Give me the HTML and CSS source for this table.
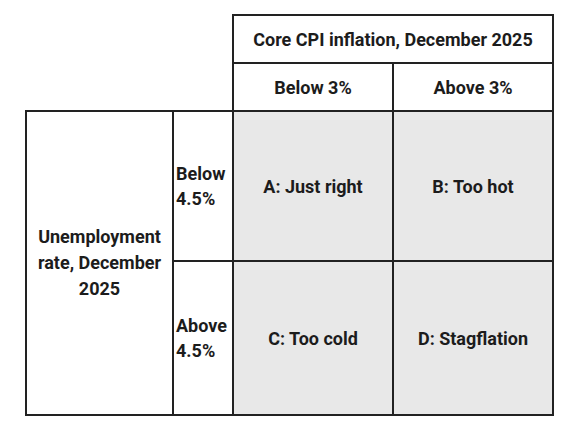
FILE: index.html
```html
<!DOCTYPE html>
<html lang="en">
<head>
  <meta charset="UTF-8">
  <title>Macro scenarios</title>
  <link rel="stylesheet" href="styles.css">
</head>
<body>
<table class="matrix">
  <colgroup>
    <col class="col-label">
    <col class="col-band">
    <col class="col-cell">
    <col class="col-cell">
  </colgroup>
  <tr class="row-head">
    <td class="blank"></td>
    <td class="blank"></td>
    <th colspan="2">Core CPI inflation, December 2025</th>
  </tr>
  <tr class="row-head">
    <td class="blank"></td>
    <td class="blank"></td>
    <th>Below 3%</th>
    <th>Above 3%</th>
  </tr>
  <tr class="row-top">
    <th class="side" rowspan="2">Unemployment rate, December 2025</th>
    <th class="band">Below 4.5%</th>
    <td class="quad">A: Just right</td>
    <td class="quad">B: Too hot</td>
  </tr>
  <tr class="row-bottom">
    <th class="band">Above 4.5%</th>
    <td class="quad">C: Too cold</td>
    <td class="quad">D: Stagflation</td>
  </tr>
</table>
</body>
</html>
```

FILE: styles.css
```css
html, body {
  margin: 0;
  padding: 0;
  background: #fff;
}

body {
  padding: 14px 0 0 25px;
  font-family: Roboto, "Liberation Sans", sans-serif;
  font-weight: 700;
  font-size: 18px;
  color: #1c1c1c;
}

.matrix {
  border-collapse: collapse;
  table-layout: fixed;
}

.col-label { width: 147px; }
.col-band  { width: 60px; }
.col-cell  { width: 160px; }

.matrix th,
.matrix td {
  border: 2px solid #222;
  padding: 0;
  font-weight: 700;
  text-align: center;
  vertical-align: middle;
  line-height: 25px;
}

.matrix td.blank {
  border: none;
}

.row-head { height: 48px; }
.row-top { height: 150px; }
.row-bottom { height: 154px; }

.matrix .side {
  padding: 0 6px;
  line-height: 26px;
}

.matrix .band {
  text-align: left;
  padding-left: 2px;
}

.quad {
  background: #e8e8e8;
}
```
